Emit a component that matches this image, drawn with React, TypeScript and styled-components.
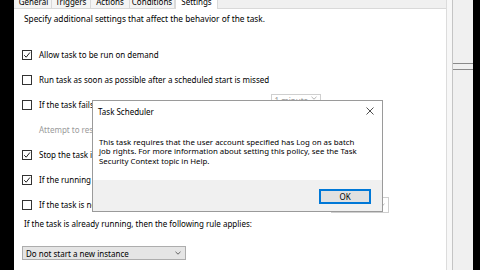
import styled, { createGlobalStyle } from "styled-components";

const GlobalStyle = createGlobalStyle`
  html, body {
    margin: 0;
    padding: 0;
    background: #000;
  }
  body {
    font-family: "Noto Sans", "Segoe UI", sans-serif;
    font-size: 8px;
    color: #000;
  }
`;

const Screen = styled.div`
  position: relative;
  display: flex;
  width: 480px;
  height: 270px;
  overflow: hidden;
  background: #000;
`;

const BlackEdge = styled.div<{ $w: number }>`
  flex: 0 0 ${(p) => p.$w}px;
  background: #000;
`;

const Window = styled.div`
  flex: 0 0 433px;
  display: flex;
  flex-direction: column;
  background: #fff;
  border-right: 1px solid #dcdcdc;
  box-sizing: border-box;
`;

const TabBar = styled.div`
  display: flex;
  align-items: flex-start;
  height: 8px;
  padding-left: 2px;
  background: #f0f0f0;
  border-bottom: 1px solid #d9d9d9;
`;

const Tab = styled.div<{ $w: number; $active?: boolean }>`
  box-sizing: border-box;
  width: ${(p) => p.$w}px;
  height: ${(p) => (p.$active ? 9 : 8)}px;
  line-height: 4px;
  text-align: center;
  font-size: 8px;
  background: ${(p) => (p.$active ? "#fff" : "#f4f4f4")};
  border-right: 1px solid #d9d9d9;
  border-left: ${(p) => (p.$active ? "1px solid #d9d9d9" : "none")};
  margin-bottom: ${(p) => (p.$active ? -1 : 0)}px;
  z-index: 1;
`;

const Panel = styled.div`
  display: flex;
  flex-direction: column;
  padding-left: 8px;
`;

const Description = styled.div`
  margin: 4px 0 0 2px;
  line-height: 12px;
  font-size: 8.3px;
`;

const OptionList = styled.div`
  display: grid;
  grid-auto-rows: 25px;
  margin-top: 17px;
`;

const OptionRow = styled.div<{ $indent?: boolean }>`
  display: flex;
  align-items: center;
  gap: 7px;
  padding-left: ${(p) => (p.$indent ? 17 : 0)}px;
`;

const Box = styled.div`
  box-sizing: border-box;
  width: 10px;
  height: 10px;
  border: 1px solid #333;
  background: #fff;
  display: flex;
  align-items: center;
  justify-content: center;
`;

const Label = styled.span<{ $muted?: boolean }>`
  color: ${(p) => (p.$muted ? "#9a9a9a" : "#000")};
  white-space: nowrap;
`;

const MiniSelect = styled.div<{ $left: number; $w: number; $top?: boolean }>`
  box-sizing: border-box;
  align-self: ${(p) => (p.$top ? "flex-start" : "center")};
  margin-top: ${(p) => (p.$top ? 2 : 0)}px;
  margin-left: ${(p) => p.$left}px;
  width: ${(p) => p.$w}px;
  height: 16px;
  border: 1px solid #cfcfcf;
  color: #9a9a9a;
  display: flex;
  align-items: ${(p) => (p.$top ? "flex-start" : "center")};
  justify-content: space-between;
  padding: ${(p) => (p.$top ? "1px 3px 0" : "0 3px")};
  line-height: 10px;
`;

const RuleText = styled.div`
  margin-left: 2px;
  line-height: 14px;
`;

const Select = styled.div`
  box-sizing: border-box;
  margin-top: 15px;
  width: 164px;
  height: 14px;
  border: 1px solid #adadad;
  background: #e5e5e5;
  display: flex;
  align-items: center;
  justify-content: space-between;
  padding: 0 4px 0 3px;
`;

const SideGap = styled.div`
  flex: 0 0 6px;
  background: #f7f7f7;
  border-right: 1px solid #c4c4c4;
  box-sizing: border-box;
`;

const SidePanel = styled.div`
  flex: 0 0 20px;
  background: #f0f0f0;
  padding-top: 63px;
  box-sizing: border-box;
`;

const SideLine = styled.div<{ $gap: number }>`
  height: 1px;
  background: #8a8a8a;
  margin-top: ${(p) => p.$gap}px;
`;

const Dialog = styled.div`
  position: absolute;
  left: 92px;
  top: 100px;
  width: 291px;
  height: 112px;
  box-sizing: border-box;
  border: 1px solid #9a9a9a;
  background: #fff;
  display: flex;
  flex-direction: column;
  z-index: 5;
`;

const TitleBar = styled.div`
  height: 20px;
  display: flex;
  align-items: center;
  justify-content: space-between;
  padding: 0 8px 0 5px;
`;

const Title = styled.span`
  font-size: 8px;
`;

const Message = styled.div`
  flex: 1;
  padding: 17px 6px 0 6px;
  line-height: 9.4px;
  font-size: 7.85px;
  white-space: nowrap;
`;

const Footer = styled.div`
  height: 31px;
  background: #f0f0f0;
  display: flex;
  justify-content: flex-end;
  padding: 9px 11px 0 0;
  box-sizing: border-box;
`;

const OkButton = styled.div`
  box-sizing: border-box;
  width: 52px;
  height: 15px;
  border: 1px solid #0078d7;
  box-shadow: inset 0 0 0 1px #0078d7;
  background: #e1e1e1;
  display: flex;
  align-items: center;
  justify-content: center;
  font-size: 8px;
`;

const Check = () => (
  <svg width="8" height="8" viewBox="0 0 8 8">
    <path d="M1.2 4.2 L3.2 6.2 L6.9 1.5" fill="none" stroke="#222" strokeWidth="1" />
  </svg>
);

const Chevron = ({ color }: { color: string }) => (
  <svg width="6" height="4" viewBox="0 0 6 4">
    <path d="M0.5 0.8 L3 3.2 L5.5 0.8" fill="none" stroke={color} strokeWidth="0.9" />
  </svg>
);

const CloseIcon = () => (
  <svg width="8" height="8" viewBox="0 0 8 8">
    <path d="M0.5 0.5 L7.5 7.5 M7.5 0.5 L0.5 7.5" stroke="#222" strokeWidth="0.8" />
  </svg>
);

const tabs = [
  { name: "General", w: 36 },
  { name: "Triggers", w: 39 },
  { name: "Actions", w: 39 },
  { name: "Conditions", w: 45 },
  { name: "Settings", w: 43, active: true },
];

export default function App() {
  return (
    <>
      <GlobalStyle />
      <Screen>
        <BlackEdge $w={14} />
        <Window>
          <TabBar>
            {tabs.map((t) => (
              <Tab key={t.name} $w={t.w} $active={t.active}>
                {t.name}
              </Tab>
            ))}
          </TabBar>
          <Panel>
            <Description>Specify additional settings that affect the behavior of the task.</Description>
            <OptionList>
              <OptionRow>
                <Box><Check /></Box>
                <Label>Allow task to be run on demand</Label>
              </OptionRow>
              <OptionRow>
                <Box />
                <Label>Run task as soon as possible after a scheduled start is missed</Label>
              </OptionRow>
              <OptionRow>
                <Box />
                <Label>If the task fails, restart every:</Label>
                <MiniSelect $left={116} $w={50} $top>
                  1 minute <Chevron color="#aaa" />
                </MiniSelect>
              </OptionRow>
              <OptionRow $indent>
                <Label $muted>Attempt to restart up to:</Label>
              </OptionRow>
              <OptionRow>
                <Box><Check /></Box>
                <Label>Stop the task if it runs longer than:</Label>
              </OptionRow>
              <OptionRow>
                <Box><Check /></Box>
                <Label>If the running task does not end when requested, force it to stop</Label>
              </OptionRow>
              <OptionRow>
                <Box />
                <Label>If the task is not scheduled to run again, delete it after:</Label>
                <MiniSelect $left={79} $w={58}>
                  30 days <Chevron color="#aaa" />
                </MiniSelect>
              </OptionRow>
            </OptionList>
            <RuleText>If the task is already running, then the following rule applies:</RuleText>
            <Select>
              Do not start a new instance <Chevron color="#555" />
            </Select>
          </Panel>
        </Window>
        <SideGap />
        <SidePanel>
          <SideLine $gap={0} />
          <SideLine $gap={5} />
        </SidePanel>
        <BlackEdge $w={7} />

        <Dialog>
          <TitleBar>
            <Title>Task Scheduler</Title>
            <CloseIcon />
          </TitleBar>
          <Message>
            This task requires that the user account specified has Log on as batch
            <br />
            job rights. For more information about setting this policy, see the Task
            <br />
            Security Context topic in Help.
          </Message>
          <Footer>
            <OkButton>OK</OkButton>
          </Footer>
        </Dialog>
      </Screen>
    </>
  );
}
